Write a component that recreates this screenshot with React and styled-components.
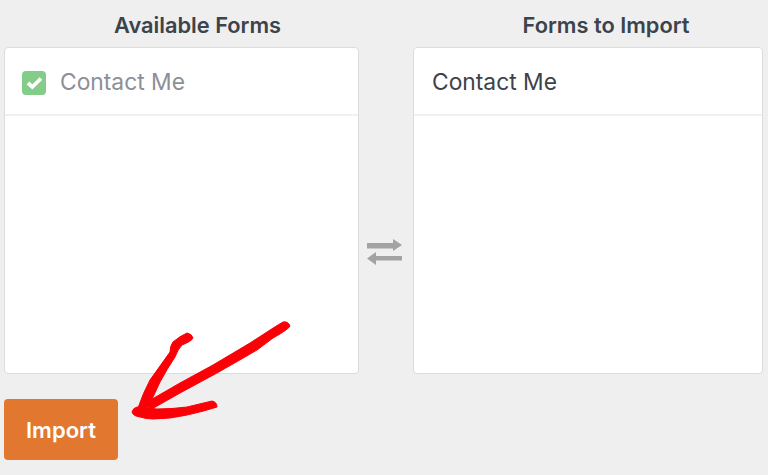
import React from "react";
import styled, { createGlobalStyle } from "styled-components";

const GlobalStyle = createGlobalStyle`
  html, body {
    margin: 0;
    padding: 0;
    background: #efefef;
    overflow: hidden;
  }
  body {
    font-family: Inter, "Liberation Sans", sans-serif;
    -webkit-font-smoothing: antialiased;
  }
`;

const Page = styled.div`
  position: relative;
  width: 768px;
  height: 475px;
  padding: 12px 5px 0 4px;
  box-sizing: border-box;
`;

const Columns = styled.div`
  display: grid;
  grid-template-columns: 355px 54px 350px;
  align-items: stretch;
`;

const Column = styled.section`
  display: flex;
  flex-direction: column;
`;

const Heading = styled.h2`
  margin: 0 0 9px;
  padding-left: ${(props) => props.$offset}px;
  height: 26px;
  font-size: 21.8px;
  line-height: 26px;
  font-weight: 600;
  color: #3c434a;
  text-align: center;
  white-space: nowrap;
`;

const Panel = styled.div`
  height: 327px;
  background: #fff;
  border: 1px solid #dcdcde;
  border-radius: 4px;
  box-sizing: border-box;
`;

const Row = styled.div`
  display: flex;
  align-items: center;
  gap: 14px;
  height: 66px;
  padding: 0 ${(props) => (props.$done ? 17 : 18)}px;
  border-bottom: 2px solid #f0f0f1;
  font-size: 22.8px;
  color: ${(props) => (props.$done ? "#8c8f94" : "#3c434a")};
`;

const Check = styled.span`
  display: flex;
  align-items: center;
  justify-content: center;
  width: 24px;
  height: 24px;
  margin-top: 3px;
  border-radius: 4px;
  background: #83cd88;
`;

const Swap = styled.div`
  display: flex;
  justify-content: center;
  align-items: flex-start;
  padding: 227px 3px 0 0;
`;

const ImportButton = styled.button`
  display: block;
  width: 114px;
  height: 61px;
  margin-top: 25px;
  padding: 0;
  border: 0;
  border-radius: 4px;
  background: #e27730;
  color: #fff;
  font-family: inherit;
  font-size: 22px;
  font-weight: 600;
`;

const Scribble = styled.svg`
  position: absolute;
  left: 0;
  top: 0;
  pointer-events: none;
`;

export default function App() {
  return (
    <Page>
      <GlobalStyle />
      <Columns>
        <Column>
          <Heading $offset={32}>Available Forms</Heading>
          <Panel>
            <Row $done>
              <Check>
                <svg width="17" height="14" viewBox="0 0 17 14">
                  <path d="M2 7 6.300 11 15 2.500" fill="none" stroke="#fff" strokeWidth="3.800" />
                </svg>
              </Check>
              Contact Me
            </Row>
          </Panel>
        </Column>
        <Swap>
          <svg width="35" height="26" viewBox="0 0 35 26">
            <path d="M0 4h26V0l9 6-9 6V9.500H0z" fill="#a3a3a3" />
            <path d="M35 17H9v-4l-9 6.500L9 26v-4.500h26z" fill="#a3a3a3" />
          </svg>
        </Swap>
        <Column>
          <Heading $offset={36}>Forms to Import</Heading>
          <Panel>
            <Row>Contact Me</Row>
          </Panel>
        </Column>
      </Columns>
      <ImportButton>Import</ImportButton>
      <Scribble width="768" height="475" viewBox="0 0 768 475">
        <g fill="#fb0007" stroke="#fb0007" strokeWidth="1" strokeLinejoin="round">
          <path d="M283 322Q288 321 290 326Q289 329 273 338L257 350Q240 360 217 373L180 393L150 410L147 402L180 383L213 365L250 343L267 332Q276 326 283 322Z" />
          <path d="M187 333Q192 334 193 338Q192 341 182 345Q178 349 175 357Q167 369 160 382L147 410L138 408Q143 393 150 380Q160 366 170 352Q170 346 173 342Q180 336 187 333Z" />
          <path d="M212 401Q217 402 217 407Q205 411 187 415Q170 419 153 419Q146 419 140 417Q133 416 132 412Q133 408 137 407L157 409Q172 409 187 407Z" />
        </g>
      </Scribble>
    </Page>
  );
}
